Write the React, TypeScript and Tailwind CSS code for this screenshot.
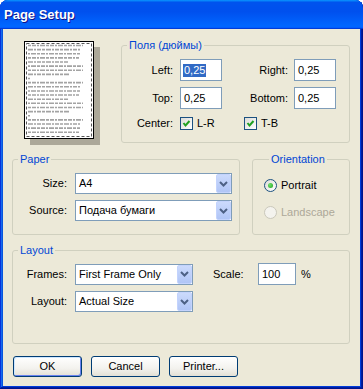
import React from 'react'

const lineWidths = [55, 52, 52, 51, 40, 55, 55, 42, 2, 55, 52, 52, 51, 40, 55, 55, 42, 2, 55, 52, 52, 51]

function PagePreview() {
  return (
    <div className="w-[70px] h-[98px] bg-white border border-black shadow-[6px_6px_0_#ACA899]">
      <svg width="68" height="96" viewBox="0 0 68 96">
        <rect x="1.5" y="1.5" width="65" height="93" fill="none" stroke="#555" strokeDasharray="3 2" />
        {lineWidths.map((w, i) => (
          <line
            key={i}
            x1="3"
            x2={3 + w}
            y1={3.5 + i * 4.13}
            y2={3.5 + i * 4.13}
            stroke="#a3a3a3"
            strokeWidth="1.6"
            strokeDasharray={i % 3 === 0 ? '3 1 4 1 2 1 5 1' : i % 3 === 1 ? '5 1 2 1 4 1 3 1' : '2 1 5 1 3 1 4 1'}
          />
        ))}
      </svg>
    </div>
  )
}

function Field({ value, w, selected }: { value: string; w: string; selected?: boolean }) {
  return (
    <div className={`${w} h-[22px] flex items-center border border-[#7F9DB9] bg-white pl-[2px]`}>
      <span className={`leading-[13px] px-[1px] ${selected ? 'bg-[#316AC5] text-white' : ''}`}>{value}</span>
    </div>
  )
}

function Combo({ value, w }: { value: string; w: string }) {
  return (
    <div className={`${w} h-[21px] flex items-stretch border border-[#7F9DB9] bg-white`}>
      <span className="flex-1 self-center pl-[3px] leading-[13px] whitespace-nowrap overflow-hidden">{value}</span>
      <div className="w-[15px] rounded-[2px] border border-[#C3D3FD] bg-[linear-gradient(to_bottom,#CBDAFC,#B0C5F6)] flex items-center justify-center">
        <svg width="9" height="6" viewBox="0 0 9 6">
          <path d="M1 1 L4.5 4.5 L8 1" stroke="#4D6185" strokeWidth="2" fill="none" />
        </svg>
      </div>
    </div>
  )
}

function Check({ label }: { label: string }) {
  return (
    <div className="flex items-center gap-[4px]">
      <div className="w-[13px] h-[13px] border border-[#1C5180] bg-[linear-gradient(135deg,#DCDCD7,#FFFFFF)] flex items-center justify-center">
        <svg width="9" height="9" viewBox="0 0 9 9">
          <path d="M1.5 4 L3.5 6.5 L7.5 2" stroke="#21A121" strokeWidth="2" fill="none" />
        </svg>
      </div>
      <span className="leading-[13px]">{label}</span>
    </div>
  )
}

function Radio({ label, checked, disabled }: { label: string; checked?: boolean; disabled?: boolean }) {
  return (
    <div className="h-[13px] flex items-center gap-[4px]">
      <div
        className={`w-[13px] h-[13px] rounded-full border flex items-center justify-center ${
          disabled ? 'border-[#CAC8BB] bg-[#F4F3EE]' : 'border-[#1C5180] bg-[linear-gradient(135deg,#DCDCD7,#FFFFFF)]'
        }`}
      >
        {checked && <div className="w-[5px] h-[5px] rounded-full bg-[radial-gradient(circle_at_35%_35%,#6EE26B,#21A121)]" />}
      </div>
      <span className={`leading-[13px] ${disabled ? 'text-[#ACA899]' : ''}`}>{label}</span>
    </div>
  )
}

function Group({ title, className, children }: { title: string; className?: string; children: React.ReactNode }) {
  return (
    <fieldset className={`border border-[#D0D0BF] rounded-[3px] ${className ?? ''}`}>
      <legend className="ml-[5px] px-[2px] leading-[13px] text-[#0046D5]">{title}</legend>
      {children}
    </fieldset>
  )
}

function Button({ label, def }: { label: string; def?: boolean }) {
  return (
    <button
      className={`w-[69px] h-[21px] rounded-[3px] border border-[#003C74] bg-[linear-gradient(to_bottom,#FFFFFF,#F3F2EE_60%,#E3E0D5)] leading-[13px] ${
        def ? 'shadow-[inset_-1px_-1px_#6982EE,inset_1px_1px_#CEE7FF]' : ''
      }`}
    >
      {label}
    </button>
  )
}

export default function App() {
  return (
    <div className="w-[363px] h-[389px] flex flex-col rounded-t-[8px] overflow-hidden bg-[#0831D9] shadow-[inset_-1px_-1px_#00138C,inset_1px_1px_#0831D9,inset_-2px_-2px_#001EA0,inset_2px_2px_#166AEE,inset_-3px_-3px_#003BDA,inset_3px_3px_#0855DD] font-['Liberation_Sans',Arial,sans-serif] text-[11px] text-black">
      {/* title bar */}
      <div className="h-[29px] shrink-0 flex items-center pl-[4px] pt-[1px] bg-[linear-gradient(to_bottom,#0997FF_0%,#0053EE_8%,#0050EE_40%,#0066FF_88%,#0066FF_93%,#005BFF_95%,#003DD7_96%,#003DD7_100%)]">
        <span className="text-white font-bold text-[13px] [text-shadow:1px_1px_0_#0F1089]">Page Setup</span>
      </div>

      <div className="flex-1 mx-[3px] mb-[3px] bg-[#ECE9D8] pl-[9px] pr-[10px] pt-[10px] flex flex-col">
        {/* preview + margins */}
        <div className="flex">
          <div className="w-[109px] pl-[12px] pt-[2px]">
            <PagePreview />
          </div>
          <Group title="Поля (дюймы)" className="flex-1 pb-[12px]">
            <div className="mt-[7px] flex items-center">
              <span className="w-[51px] text-right">Left:</span>
              <div className="ml-[7px]">
                <Field value="0,25" w="w-[42px]" selected />
              </div>
              <span className="w-[66px] text-right">Right:</span>
              <div className="ml-[6px]">
                <Field value="0,25" w="w-[42px]" />
              </div>
            </div>
            <div className="mt-[6px] flex items-center">
              <span className="w-[51px] text-right">Top:</span>
              <div className="ml-[7px]">
                <Field value="0,25" w="w-[42px]" />
              </div>
              <span className="w-[66px] text-right">Bottom:</span>
              <div className="ml-[6px]">
                <Field value="0,25" w="w-[42px]" />
              </div>
            </div>
            <div className="mt-[8px] h-[13px] flex items-center">
              <span className="w-[51px] text-right leading-[13px]">Center:</span>
              <div className="ml-[7px] w-[64px]">
                <Check label="L-R" />
              </div>
              <Check label="T-B" />
            </div>
          </Group>
        </div>

        {/* paper + orientation */}
        <div className="mt-[10px] flex gap-[12px]">
          <Group title="Paper" className="w-[228px] pb-[13px]">
            <div className="mt-[7px] flex items-center">
              <span className="w-[54px] text-right">Size:</span>
              <div className="ml-[8px]">
                <Combo value="A4" w="w-[157px]" />
              </div>
            </div>
            <div className="mt-[6px] flex items-center">
              <span className="w-[54px] text-right">Source:</span>
              <div className="ml-[8px]">
                <Combo value="Подача бумаги" w="w-[157px]" />
              </div>
            </div>
          </Group>
          <Group title="Orientation" className="flex-1 pl-[11px]">
            <div className="mt-[13px]">
              <Radio label="Portrait" checked />
            </div>
            <div className="mt-[14px]">
              <Radio label="Landscape" disabled />
            </div>
          </Group>
        </div>

        {/* layout */}
        <Group title="Layout" className="mt-[9px] h-[100px]">
          <div className="mt-[6px] flex items-center">
            <span className="w-[54px] text-right">Frames:</span>
            <div className="ml-[8px]">
              <Combo value="First Frame Only" w="w-[118px]" />
            </div>
            <span className="ml-[20px] w-[45px]">Scale:</span>
            <Field value="100" w="w-[38px]" />
            <span className="ml-[5px]">%</span>
          </div>
          <div className="mt-[6px] flex items-center">
            <span className="w-[54px] text-right">Layout:</span>
            <div className="ml-[8px]">
              <Combo value="Actual Size" w="w-[118px]" />
            </div>
          </div>
        </Group>

        {/* buttons */}
        <div className="mt-[12px] ml-[1px] flex gap-[9px]">
          <Button label="OK" def />
          <Button label="Cancel" />
          <Button label="Printer..." />
        </div>
      </div>
    </div>
  )
}
